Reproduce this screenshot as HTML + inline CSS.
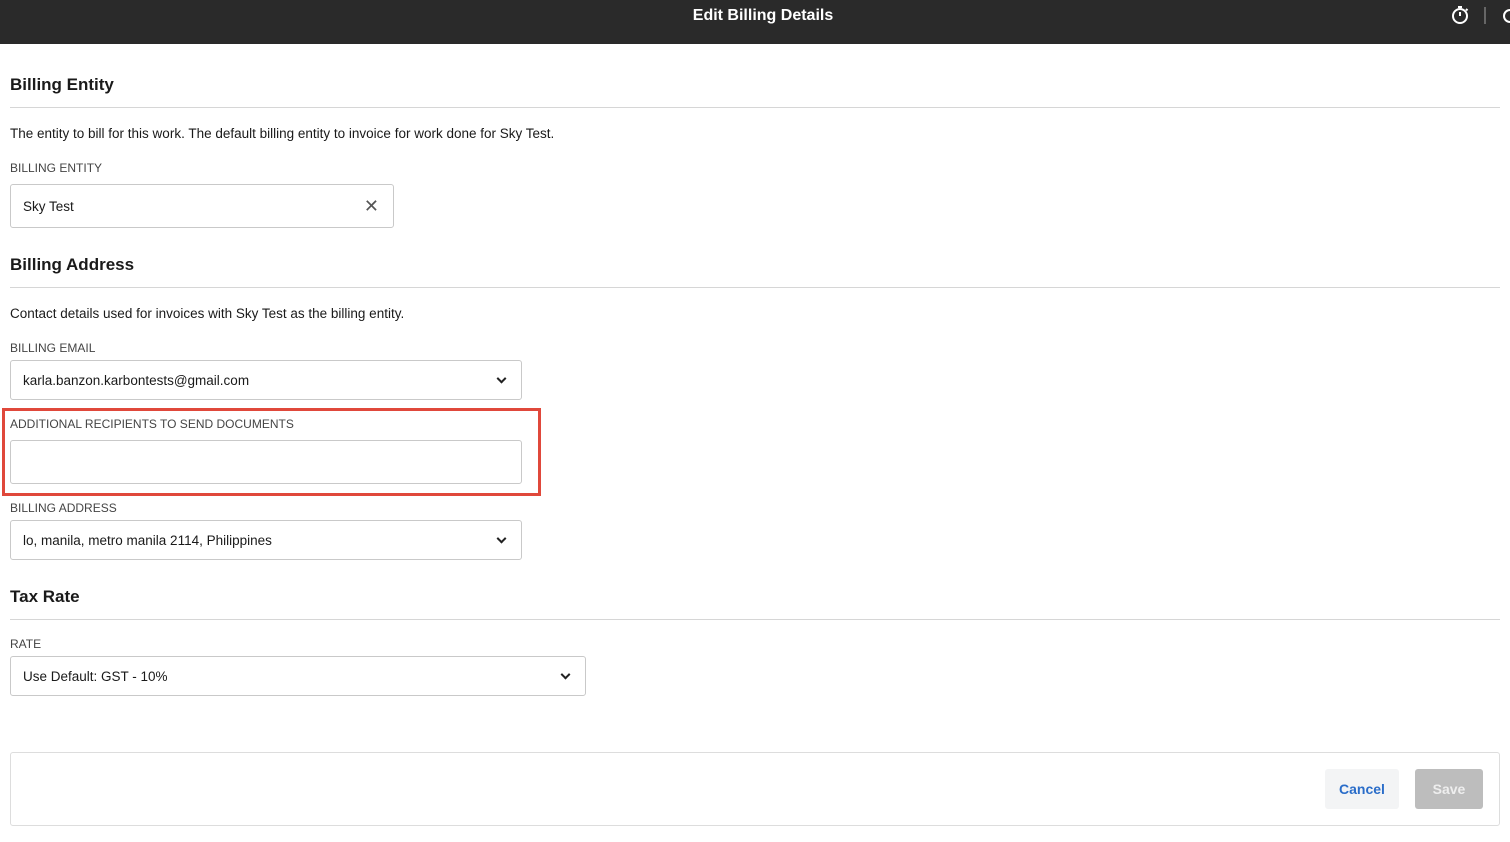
<!DOCTYPE html>
<html><head><style>
*{box-sizing:border-box;margin:0;padding:0}
body{width:1510px;height:842px;background:#fff;font-family:"Liberation Sans",sans-serif;color:#1a1a1a;position:relative;overflow:hidden}
.abs{position:absolute}
.top{left:0;top:0;width:1510px;height:44px;background:#2a2a2a}
.title{left:0;width:1526px;top:7px;text-align:center;color:#fff;font-weight:bold;font-size:16px}
h2{position:absolute;left:10px;font-size:17px;font-weight:bold}
.hr{position:absolute;left:10px;width:1490px;height:1px;background:#d6d6d6}
.p{position:absolute;left:10px;font-size:13.5px}
.lbl{position:absolute;left:10px;font-size:12px;color:#444}
.box{position:absolute;left:10px;border:1px solid #c9c9c9;border-radius:3px;font-size:13.5px;padding-left:12px;display:flex;align-items:center}
.chev{position:absolute;right:16px;top:50%;width:7px;height:7px;border-right:2px solid #222;border-bottom:2px solid #222;transform:translateY(-70%) rotate(45deg)}
</style></head><body>
<div class="abs top"></div>
<div class="abs title">Edit Billing Details</div>
<svg class="abs" style="left:1450px;top:5px" width="20" height="20" viewBox="0 0 20 20" fill="none" stroke="#fff" stroke-width="2"><circle cx="10" cy="11" r="7"/><path d="M10 7v4M8 2h4M16 4l1.5 1.5"/></svg>
<div class="abs" style="left:1484px;top:7px;width:2px;height:17px;background:#666"></div>
<svg class="abs" style="left:1500px;top:6px" width="12" height="20"><circle cx="10" cy="10" r="6" fill="none" stroke="#fff" stroke-width="2"/></svg>

<h2 style="top:75px">Billing Entity</h2>
<div class="hr" style="top:107px"></div>
<div class="p" style="top:126px">The entity to bill for this work. The default billing entity to invoice for work done for Sky Test.</div>
<div class="lbl" style="top:161px">BILLING ENTITY</div>
<div class="box" style="top:184px;width:384px;height:44px">Sky Test<span style="position:absolute;right:14px;font-size:18px;color:#555">✕</span></div>

<h2 style="top:255px">Billing Address</h2>
<div class="hr" style="top:287px"></div>
<div class="p" style="top:306px">Contact details used for invoices with Sky Test as the billing entity.</div>
<div class="lbl" style="top:341px">BILLING EMAIL</div>
<div class="box" style="top:360px;width:512px;height:40px">karla.banzon.karbontests@gmail.com<span class="chev"></span></div>
<div class="abs" style="left:2px;top:408px;width:539px;height:88px;border:3px solid #e0483b"></div>
<div class="lbl" style="top:417px">ADDITIONAL RECIPIENTS TO SEND DOCUMENTS</div>
<div class="box" style="top:440px;width:512px;height:44px"></div>
<div class="lbl" style="top:501px">BILLING ADDRESS</div>
<div class="box" style="top:520px;width:512px;height:40px">lo, manila, metro manila 2114, Philippines<span class="chev"></span></div>

<h2 style="top:587px">Tax Rate</h2>
<div class="hr" style="top:619px"></div>
<div class="lbl" style="top:637px">RATE</div>
<div class="box" style="top:656px;width:576px;height:40px">Use Default: GST - 10%<span class="chev"></span></div>

<div class="abs" style="left:10px;top:752px;width:1490px;height:74px;border:1px solid #ddd;border-radius:3px"></div>
<div class="abs" style="left:1325px;top:769px;width:74px;height:40px;background:#f3f4f5;border-radius:3px;color:#2a6dc9;font-weight:bold;font-size:14px;text-align:center;line-height:40px">Cancel</div>
<div class="abs" style="left:1415px;top:769px;width:68px;height:40px;background:#bdbdbd;border-radius:3px;color:#eee;font-weight:bold;font-size:14px;text-align:center;line-height:40px">Save</div>
</body></html>
